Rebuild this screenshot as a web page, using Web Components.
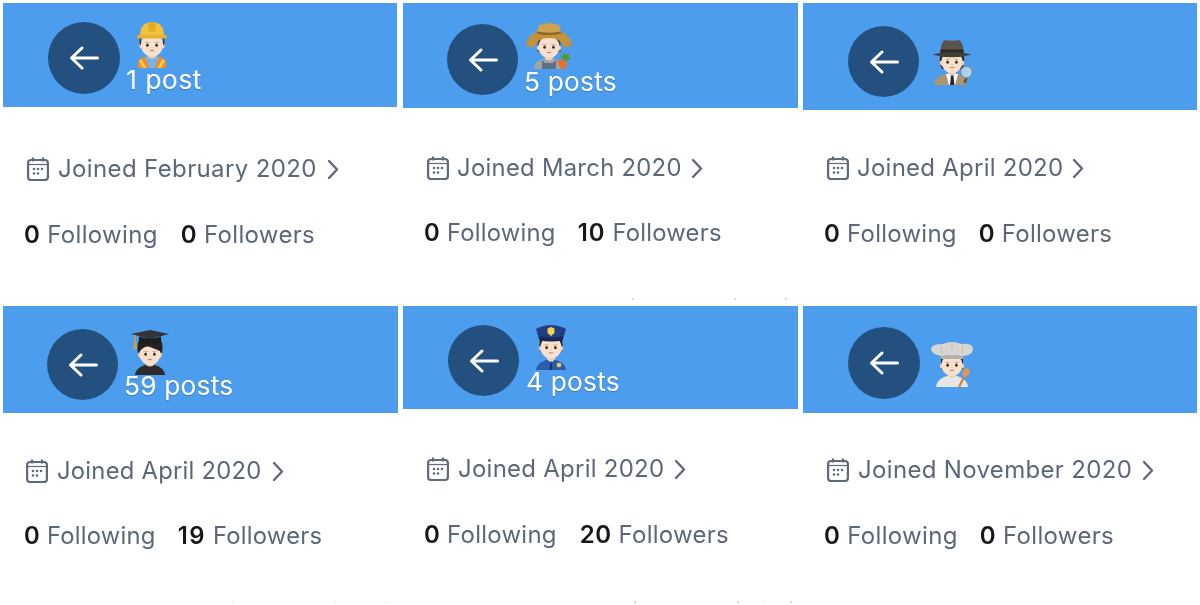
<!DOCTYPE html>
<html lang="en"><head><meta charset="utf-8"><title>Profiles</title>
<style>
html,body{margin:0;padding:0;background:#fff}
body{width:1200px;height:605px;overflow:hidden;font-family:Inter,"Noto Sans",sans-serif}
profile-grid{filter:blur(.55px)}
</style></head><body>
<profile-grid>
<profile-card joined="February 2020" following="0" followers="0" style="--bar-w:394px;--bar-h:104px;--circle-x:45px;--circle-y:19px;--d:72px;--gap:9px;--emoji-y:0px;--post-y:-3px;--post-x:-3px;--post-ls:.55px;--join-y:48px;--stats-y:38px;--cal-x:24px;--ico-gap:9px;--ls:.37px;--stats-ls:.33px;--stats-x:21px;--stats-gap:23px;--fs:24px">
  <person-emoji slot="emoji" kind="worker"></person-emoji><span slot="posts">1 post</span></profile-card>
<profile-card joined="March 2020" following="0" followers="10" style="--bar-w:395px;--bar-h:105px;--circle-x:44px;--circle-y:21px;--d:71px;--gap:8px;--emoji-y:-1px;--post-y:-2px;--post-x:-2px;--join-y:46px;--stats-y:37px;--cal-x:24px;--ico-gap:8px;--ls:.3px;--stats-ls:.24px;--num-ls:1px;--stats-x:21px;--stats-gap:22px;--fs:23.8px">
  <person-emoji slot="emoji" kind="farmer"></person-emoji><span slot="posts">5 posts</span></profile-card>
<profile-card joined="April 2020" following="0" followers="0" style="--bar-w:394px;--bar-h:107px;--circle-x:45px;--circle-y:23px;--d:71px;--gap:10px;--emoji-y:13px;--post-y:0px;--post-x:0px;--join-y:44px;--stats-y:38px;--cal-x:24px;--ico-gap:8px;--ls:.245px;--stats-ls:.24px;--stats-x:21px;--stats-gap:22px;--fs:24px">
  <person-emoji slot="emoji" kind="detective"></person-emoji></profile-card>
<profile-card joined="April 2020" following="0" followers="19" style="--bar-w:395px;--bar-h:107px;--circle-x:44px;--circle-y:23px;--d:71px;--gap:9px;--emoji-y:1px;--post-y:-5px;--post-x:-3px;--join-y:44px;--stats-y:37px;--cal-x:23px;--ico-gap:9px;--ls:.245px;--stats-ls:.24px;--num-ls:1.5px;--stats-x:21px;--stats-gap:22px;--fs:23.8px">
  <person-emoji slot="emoji" kind="grad"></person-emoji><span slot="posts">59 posts</span></profile-card>
<profile-card joined="April 2020" following="0" followers="20" style="--bar-w:395px;--bar-h:103px;--circle-x:45px;--circle-y:19px;--d:71px;--gap:9px;--emoji-y:-1px;--post-y:-3px;--post-x:-2px;--join-y:46px;--stats-y:38px;--cal-x:24px;--ico-gap:9px;--ls:.245px;--stats-ls:.24px;--num-ls:.5px;--stats-x:21px;--stats-gap:23px;--fs:24px">
  <person-emoji slot="emoji" kind="police"></person-emoji><span slot="posts">4 posts</span></profile-card>
<profile-card joined="November 2020" following="0" followers="0" style="--bar-w:394px;--bar-h:107px;--circle-x:45px;--circle-y:21px;--d:72px;--gap:9px;--emoji-y:14px;--post-y:0px;--post-x:0px;--join-y:43px;--stats-y:38px;--cal-x:24px;--ico-gap:9px;--ls:.33px;--stats-ls:.33px;--stats-x:21px;--stats-gap:22px;--fs:24px">
  <person-emoji slot="emoji" kind="chef"></person-emoji></profile-card>
</profile-grid>
<script>
const skin='#f8e0cd';
function face(cx,cy,r){return `
<ellipse cx="${cx-r}" cy="${cy+1}" rx="1.7" ry="2.4" fill="#eec9ae"/><ellipse cx="${cx+r}" cy="${cy+1}" rx="1.7" ry="2.4" fill="#eec9ae"/>
<ellipse cx="${cx}" cy="${cy}" rx="${r}" ry="${r*1.05}" fill="${skin}"/>
<ellipse cx="${cx-r*.42}" cy="${cy+.2}" rx="1.3" ry="1.6" fill="#3b2a22"/><ellipse cx="${cx+r*.42}" cy="${cy+.2}" rx="1.3" ry="1.6" fill="#3b2a22"/>
<path d="M${cx-r*.62} ${cy-2.6}h${r*.4}M${cx+r*.22} ${cy-2.6}h${r*.4}" stroke="#b4957e" stroke-width=".7"/>
<path d="M${cx-.7} ${cy+2.6}h1.4" stroke="#dcae92" stroke-width=".9"/>
<path d="M${cx-2.2} ${cy+5.2}q2.2 1 4.4 0" stroke="#b87f6f" stroke-width="1" fill="none"/>`}
const art={
worker:`
<path d="M11 46v-5q1-7 12-7t12 7v5z" fill="#7fb2e6"/>
<path d="M9 46v-5q1-5 7-6.500l4 11.500z" fill="#ee8f2e"/><path d="M37 46v-5q-1-5-7-6.500l-4 11.500z" fill="#ee8f2e"/>
<path d="M11 38l5 8M35 38l-5 8" stroke="#f3d648" stroke-width="2.600"/>
<path d="M19 30h8v5q-4 3-8 0z" fill="#eccdb5"/>
${face(23,23,11)}
<path d="M12 16v7l-1.500-1v-6zM34 16v7l1.500-1v-6z" fill="#4a3326"/>
<path d="M11 14Q11 0 23 0T35 14z" fill="#f2c13c"/><path d="M19.500 .5h7v9h-7z" fill="#e3a927"/>
<path d="M8.500 13h29q1 3-1 3.500h-27q-2-.5-1-3.500z" fill="#eab02e"/>`,
farmer:`
<path d="M8 46q0-10 15-11 15 1 15 11z" fill="#a0a3a7"/><path d="M16 37v9h14v-9l-3 3h-8z" fill="#5c7188"/>
<path d="M19 31h8v5q-4 3-8 0z" fill="#eccdb5"/>
<path d="M12 16h22l1 12q-12 6-24 0z" fill="#5d4231"/>
${face(23,24,10.5)}
<path d="M0 22Q2 11 11 9 13 0 23 0t12 9q9 2 11 13-3 4-9 1Q35 15 23 15T9 23q-6 3-9-1z" fill="#c2923f"/>
<path d="M13 2q10-3 20 0l2 7H11z" fill="#cfa24f"/>
<path d="M11 9.500q12 3 24 0" stroke="#8c6526" stroke-width="2" fill="none"/>
<path d="M35 46l-4-8 6-2q4 3 4 6l-2 4z" fill="#e56f2c"/>
<path d="M37 37l-3-5 3 1 1-4 2 3 3-2v4l2 2-4 2z" fill="#4f9a39"/>`,
detective:`
<path d="M5 46q0-10 18-12 14 1 15 12z" fill="#ab9570"/>
<path d="M17 35h12l-3 11h-6z" fill="#fff"/><path d="M22 36h2.400l1 10h-4.400z" fill="#26282e"/>
<path d="M19 30h8v5q-4 3-8 0z" fill="#eccdb5"/>
<path d="M11 16q-1 9 2 14h20q3-5 2-14z" fill="#3d2b22"/>
${face(23,23,10.5)}
<path d="M11 14Q12 1 17 1q3 1 6 .5 3 .5 6-.5 5 0 6 13z" fill="#5b544e"/><path d="M11.500 10.500h23v4h-23z" fill="#2e2a27"/>
<path d="M3 15.500q20-5.500 40 0-20 5.500-40 0z" fill="#443e39"/>
<path d="M38 37l-2 6" stroke="#6a5032" stroke-width="2.500" stroke-linecap="round"/>
<circle cx="37.500" cy="33" r="5.800" fill="#a8d2ee" stroke="#7f8d99" stroke-width="1.300"/>`,
grad:`
<path d="M8 45q1-9 15-11 14 2 15 11z" fill="#2f2b2b"/>
<path d="M19 30h8v5q-4 3-8 0z" fill="#eccdb5"/>
<path d="M12 10h22q3 7 0 17H12q-3-10 0-17z" fill="#242121"/>
${face(23,24,10.5)}
<path d="M13 21q5-6 10-4 5 2 10 4v-8H13z" fill="#242121"/>
<path d="M4 4 23 0l19 4-19 5z" fill="#33343b"/><path d="M12 6.500q11 4 22 0v5q-11 3-22 0z" fill="#1d1c1e"/>
<path d="M8 5v10" stroke="#d7a02f" stroke-width="1.500"/><path d="M7 13h2.400l.6 6H6.400z" fill="#d7a02f"/>`,
police:`
<path d="M8 46q1-9 15-11 14 2 15 11z" fill="#2d5ca8"/>
<path d="M19 35l4 4 4-4-1-2h-6z" fill="#fff" opacity=".9"/><path d="M22.500 37h1l1 9h-3z" fill="#1a3468"/>
<circle cx="31" cy="41" r="2.300" fill="#f0cf4a"/>
<path d="M19 31h8v4q-4 3-8 0z" fill="#eccdb5"/>
<path d="M12 14h22l1 13H11z" fill="#2b2320"/>
${face(23,23.5,10.5)}
<path d="M8 5Q23-3 38 5l-3 10H11z" fill="#223f85"/>
<path d="M11 12q12 3 24 0v4q-12 3-24 0z" fill="#14285a"/>
<path d="M23 3l3.500 1.500V9L23 12 19.500 9V4.500z" fill="#f4d34c"/>`,
chef:`
<path d="M7 46q1-10 16-12 15 2 16 12z" fill="#e8e6e2"/>
<path d="M19 31h8v4q-4 3-8 0z" fill="#eccdb5"/>
<path d="M12 18h22v10H12z" fill="#2b2320"/>
${face(23,24,10.5)}
<path d="M12 18h22v-4H12z" fill="#b5b2ae"/>
<path d="M12 15Q2 13 2 8T14 3q9-4 18 0 12-1 12 5t-10 7q-11-3-22 0z" fill="#d8d6d2"/>
<path d="M12 5q1 3 .5 7M23 3v7M34 5q-1 3-.5 7" stroke="#b6b3ae" stroke-width=".8" fill="none"/>
<path d="M30 46l5-10" stroke="#c98a4b" stroke-width="2.400"/>
<ellipse cx="37" cy="31.500" rx="3.300" ry="4.600" transform="rotate(25 37 31.500)" fill="#d79a5a"/>`
};
class PersonEmoji extends HTMLElement{
  constructor(){super();this.attachShadow({mode:'open'})}
  connectedCallback(){
    this.shadowRoot.innerHTML=`<style>:host{display:block;width:46px;height:46px}svg{display:block}</style>
    <svg width="46" height="46" viewBox="0 0 46 46" aria-hidden="true">${art[this.getAttribute('kind')]}</svg>`;
  }
}
customElements.define('person-emoji',PersonEmoji);

const gridT=document.createElement('template');
gridT.innerHTML=`<style>
:host{display:grid;grid-template-columns:repeat(3,400px);grid-template-rows:303px 302px;width:1200px;height:605px;position:relative;overflow:hidden}
.specks{position:absolute;left:0;right:0;height:2px}
.specks i{position:absolute;top:0;width:2px;height:2px;background:#c9ccd0;border-radius:1px}
</style><slot></slot>
<div class="specks" style="top:298px"><i style="left:632px"></i><i style="left:734px"></i><i style="left:785px"></i></div>
<div class="specks" style="top:601px"><i style="left:232px;opacity:.4"></i><i style="left:334px;opacity:.4"></i><i style="left:386px;opacity:.4"></i><i style="left:634px"></i><i style="left:737px"></i><i style="left:763px;opacity:.4"></i><i style="left:790px"></i></div>`;
class ProfileGrid extends HTMLElement{
  constructor(){super();this.attachShadow({mode:'open'}).append(gridT.content.cloneNode(true))}
}
customElements.define('profile-grid',ProfileGrid);

const cardT=document.createElement('template');
cardT.innerHTML=`<style>
:host{display:block;padding:3px 0 0 3px;font:400 var(--fs)/28px Inter,"Noto Sans",sans-serif;color:#5c6878}
.bar{display:flex;align-items:flex-start;width:var(--bar-w);height:var(--bar-h);box-sizing:border-box;background:#4d9def;padding:var(--circle-y) 0 0 var(--circle-x);gap:var(--gap)}
.back{flex:none;display:grid;place-items:center;width:var(--d);height:var(--d);border-radius:50%;background:#24507f}
.who{display:flex;flex-direction:column;align-items:flex-start;margin-top:var(--emoji-y)}
.posts{font-size:26.3px;line-height:30px;color:#fff;text-shadow:0 1px 1px rgba(30,60,100,.35);margin:var(--post-y) 0 0 var(--post-x);letter-spacing:var(--post-ls,.2px);white-space:nowrap}
.join{display:flex;align-items:center;gap:var(--ico-gap);margin:var(--join-y) 0 0 var(--cal-x);letter-spacing:var(--ls)}
.join svg.chev{margin-left:1px}
.stats{display:flex;gap:var(--stats-gap);margin:var(--stats-y) 0 0 var(--stats-x);letter-spacing:var(--stats-ls)}
b{font-weight:600;color:#14171c}
b.c{letter-spacing:var(--num-ls,var(--stats-ls))}
svg{display:block;flex:none}
</style>
<div class="bar">
  <div class="back"><svg width="30" height="26" viewBox="0 0 30 26" fill="none" stroke="#fff" stroke-width="3" stroke-linecap="round" stroke-linejoin="round"><path d="M2.500 13h26M13 3 2.500 13 13 23"/></svg></div>
  <div class="who"><slot name="emoji"></slot><div class="posts"><slot name="posts"></slot></div></div>
</div>
<div class="join">
  <svg width="22" height="24" viewBox="0 0 22 24" fill="none" stroke="#5f6b7b" stroke-width="2.200"><rect x="1.100" y="3" width="19.800" height="20" rx="3"/><path d="M1 7.500h20" stroke-width="1.200"/><path d="M6 .500v4M16 .500v4"/><g fill="#5f6b7b" stroke="none"><circle cx="7" cy="12" r="1.300"/><circle cx="11" cy="12" r="1.300"/><circle cx="15" cy="12" r="1.300"/><circle cx="7" cy="16.500" r="1.300"/><circle cx="11" cy="16.500" r="1.300"/></g></svg>
  <span class="j"></span>
  <svg class="chev" width="12" height="21" viewBox="0 0 12 21" fill="none" stroke="#5f6b7b" stroke-width="2.400" stroke-linecap="round" stroke-linejoin="round"><path d="M2 2l8 8.500L2 19"/></svg>
</div>
<div class="stats"><span><b class="a"></b> Following</span><span><b class="c"></b> Followers</span></div>`;
class ProfileCard extends HTMLElement{
  constructor(){super();this.attachShadow({mode:'open'}).append(cardT.content.cloneNode(true))}
  connectedCallback(){
    const s=this.shadowRoot;
    s.querySelector('.j').textContent='Joined '+this.getAttribute('joined');
    s.querySelector('.a').textContent=this.getAttribute('following');
    s.querySelector('.c').textContent=this.getAttribute('followers');
  }
}
customElements.define('profile-card',ProfileCard);
</script>
</body></html>
